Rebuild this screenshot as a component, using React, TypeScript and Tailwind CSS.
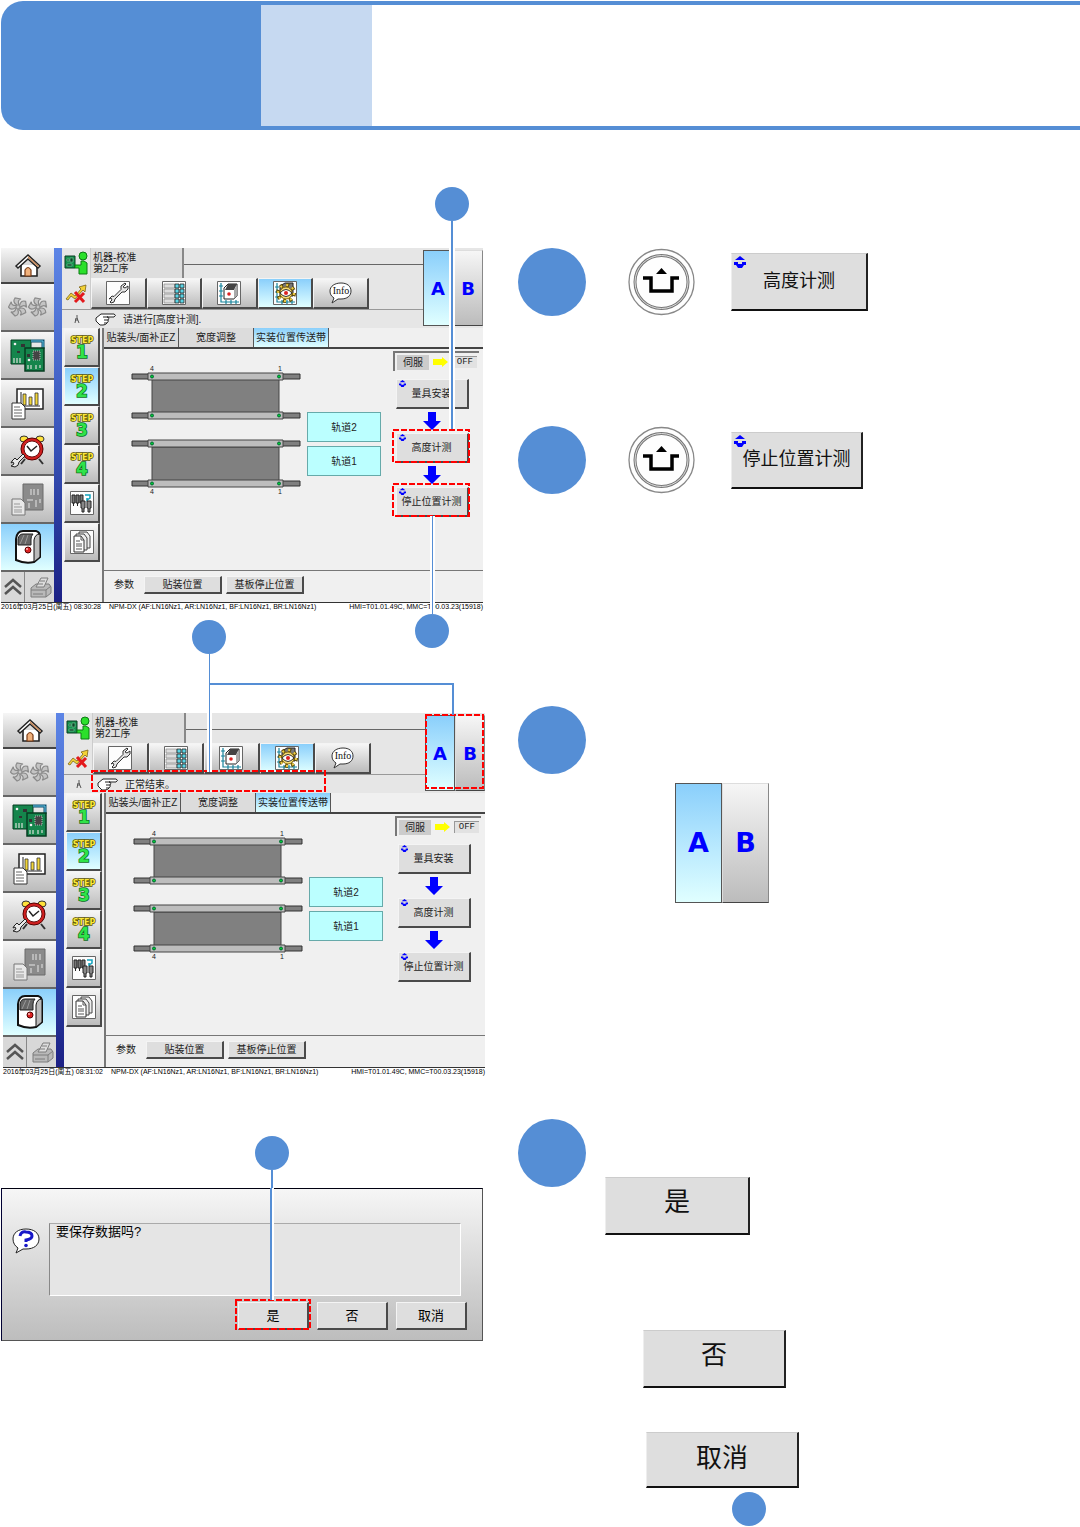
import type { ReactNode } from "react";
import clsx from "clsx";

const raised =
  "border-t border-l border-r-2 border-b-2 border-t-[#f4f4f4] border-l-[#f4f4f4] border-r-[#4a4a4a] border-b-[#4a4a4a]";
const grey = "bg-linear-to-b from-[#f6f6f6] to-[#bcbcbc]";
const active = "bg-linear-to-b from-[#8acffb] to-[#e0ffff]";

function HomeIcon() {
  return (
    <svg width="28" height="26" viewBox="0 0 28 26" aria-hidden="true">
      <path d="M7 13v11h16V13" fill="#fff" stroke="#222" strokeWidth="1.6" />
      <path d="M2 14 14 3l12 11-2 2L14 7 4 16Z" fill="#fff" stroke="#222" strokeWidth="1.5" />
      <path d="M14 4 25 14l-1 1L14 6Z" fill="#c98a5a" />
      <path d="M11 24v-6q3-5 6 0v6Z" fill="#f2b27c" stroke="#7a3b14" strokeWidth="1.2" />
    </svg>
  );
}

function FanIcon() {
  return (
    <svg width="40" height="24" viewBox="0 0 40 24" fill="none" stroke="#8a8a8a" strokeWidth="1.2" aria-hidden="true">
      {[10, 30].map((x) => (
        <g key={x} transform={`translate(${x} 12)`}>
          {[0, 72, 144, 216, 288].map((a) => (
            <path key={a} transform={`rotate(${a})`} d="M-1-2Q-6-5-3-9L3-8Q-1-7 1-2" fill="#c4c4c4" />
          ))}
          <circle r="2" fill="#c4c4c4" />
        </g>
      ))}
    </svg>
  );
}

function BoardsIcon() {
  return (
    <svg width="38" height="38" viewBox="0 0 38 38" aria-hidden="true">
      <path d="M2 4h20v24H2Z" fill="#15854c" stroke="#063d20" />
      <path d="M22 5h12v8" fill="none" stroke="#0b4e6e" strokeWidth="3" />
      <path d="M22 5h12v8" fill="none" stroke="#69c8e8" />
      <path d="M16 12h19v23H16Z" fill="#15854c" stroke="#063d20" strokeWidth="1.5" />
      <path d="M24 15h7v9h-7Z" fill="#444" stroke="#bbb" strokeDasharray="1 1" />
      <path d="M5 22v5M8 22v5M11 22v5M19 29v4M22 29v4M27 29v4M31 29v3" stroke="#a8c8b4" strokeWidth="1.6" />
      <path d="M12 8h4v3h-4ZM18 18h3v3h-3ZM8 15h3v2H8Z" fill="#333" />
      <circle cx="6" cy="8" r="1.3" fill="#eee" />
      <circle cx="20" cy="24" r="1.3" fill="#eee" />
    </svg>
  );
}

function ChartIcon() {
  return (
    <svg width="34" height="34" viewBox="0 0 34 34" aria-hidden="true">
      <path d="M6 3h26v20H6Z" fill="#fff" stroke="#222" strokeWidth="1.5" />
      <path d="M10 6v14h19" fill="none" stroke="#222" />
      <path d="M12 8h3v11h-3ZM18 11h3v8h-3ZM24 7h3v12h-3Z" fill="#f2d63a" stroke="#333" strokeWidth=".8" />
      <path d="M1 17h9l4 4v12H1Z" fill="#fff" stroke="#333" />
      <path d="M3 21h6M3 24h8M3 27h8M3 30h8" stroke="#666" />
    </svg>
  );
}

function ClockIcon() {
  return (
    <svg width="36" height="34" viewBox="0 0 36 34" aria-hidden="true">
      <path d="m15 25-4 5M29 25l4 5" stroke="#333" strokeWidth="2" />
      <ellipse cx="14" cy="5" rx="4" ry="3" fill="#ffe23a" stroke="#333" />
      <ellipse cx="30" cy="5" rx="4" ry="3" fill="#ffe23a" stroke="#333" />
      <circle cx="22" cy="15" r="11" fill="#d32020" stroke="#500" />
      <circle cx="22" cy="15" r="8" fill="#fff" stroke="#611" />
      <path d="m17 12 4 5 6-5" fill="none" stroke="#222" strokeWidth="1.5" />
      <path d="m2 27 3-3 2 2 6-6 2 2-6 6q0 4-4 5l-4-1 3-2-1-2-2 1Z" fill="#e8e8e8" stroke="#222" />
    </svg>
  );
}

function ReportIcon() {
  return (
    <svg width="34" height="34" viewBox="0 0 34 34" aria-hidden="true">
      <path d="M12 2h20v26H12Z" fill="#8b8b8b" stroke="#6b6b6b" />
      <path d="M20 7v6M23 7v6M27 7v6M16 18h6M18 21v5M25 18v7M29 17v4" stroke="#c8c8c8" strokeWidth="1.5" />
      <path d="M1 17h9l4 4v12H1Z" fill="#e8e8e8" stroke="#777" />
      <path d="M3 22h6M3 25h8M3 28h8M3 30h8" stroke="#999" />
    </svg>
  );
}

function MachineIcon() {
  return (
    <svg width="28" height="36" viewBox="0 0 28 36" aria-hidden="true">
      <path d="M2 31V10Q3 2 9 2h13q4 1 4 6v20l-6 5q-9 2-18-2Z" fill="#fff" stroke="#111" strokeWidth="2" />
      <path d="M20 33V11q1-6 6-6v23Z" fill="#bbb" stroke="#111" />
      <path d="M4 16v-6q1-5 5-5h10q-2 2-2 5v6Z" fill="#666" stroke="#222" />
      <path d="m6 15 4-9M11 15l3-9" stroke="#999" />
      <circle cx="14" cy="21" r="3" fill="#d22" stroke="#500" />
      <circle cx="13" cy="20" r="1" fill="#fbb" />
    </svg>
  );
}

function PrinterIcon() {
  return (
    <svg width="24" height="24" viewBox="0 0 24 24" fill="#b9b9b9" stroke="#7d7d7d" aria-hidden="true">
      <path d="m3 13 5-4h13l2 3v6l-5 4H3Z" />
      <path d="m8 12 5-9h7l-4 9Z" fill="#ddd" />
      <path d="M3 15h15l5-4M18 15v7M5 19h10M12 6h5M10 9h5" fill="none" />
    </svg>
  );
}

function OperatorIcon() {
  return (
    <svg width="24" height="24" viewBox="0 0 24 24" aria-hidden="true">
      <path d="M1 5h10v12H1Z" fill="#17914f" stroke="#063d20" />
      <path d="M3 8h2v2H3ZM6 7h3v4H6ZM3 13h5v2H3Z" fill="#0a4727" stroke="#8fd0a8" strokeWidth=".5" />
      <path d="M11 14h6v-4h3l3 2v11h-8v-6h-4Z" fill="#2be02b" stroke="#0c7a14" />
      <circle cx="19" cy="5" r="4" fill="#2be02b" stroke="#0c7a14" />
    </svg>
  );
}

function NoFeedIcon() {
  return (
    <svg width="22" height="20" viewBox="0 0 22 20" aria-hidden="true">
      <path d="m1 15 5-6 4 3 6-7-2-2 7-2-1 7-2-2-8 9-4-3-3 4Z" fill="#f3d235" stroke="#7c641b" strokeWidth=".8" />
      <path d="m10 8 9 10M19 9l-9 9" stroke="#e3191c" strokeWidth="3" />
    </svg>
  );
}

function HandIcon() {
  return (
    <svg width="22" height="14" viewBox="0 0 22 14" fill="#fff" stroke="#222" aria-hidden="true">
      <path d="M6 2h13q3 1 0 3h-7q3 0 1 3 1 1-1 3-1 2-4 2H5L1 9V6Z" />
      <path d="M8 5h5M9 8h4M9 11h3" fill="none" />
    </svg>
  );
}

function IconTile({ children }: { children: ReactNode }) {
  return (
    <svg width="24" height="24" viewBox="0 0 24 24" fill="none" aria-hidden="true">
      <path d="M.5.5h23v23H.5Z" fill="#fdfdfd" stroke="#666" />
      {children}
    </svg>
  );
}

function WrenchIcon() {
  return (
    <IconTile>
      <path
        d="m3 18 3-3 2 .5 7-7V5l4-3 1 1-3 3 2 1 3-2v3l-3 3h-3l-7 7-1 3-3 1-1-1 2-2-1-2Z"
        fill="#e4e4e4"
        stroke="#333"
      />
    </IconTile>
  );
}

function TableIcon() {
  return (
    <IconTile>
      <path d="M2 3h11v4H2ZM2 8h11v4H2ZM2 13h11v4H2ZM2 18h11v4H2Z" fill="#ddd" stroke="#888" strokeWidth=".7" />
      <path
        d="M13 3h4v4h-4ZM18 3h4v4h-4ZM13 8h4v4h-4ZM18 8h4v4h-4ZM13 13h4v4h-4ZM18 13h4v4h-4ZM13 18h4v4h-4ZM18 18h4v4h-4Z"
        fill="#5cd4e4"
        stroke="#222"
        strokeWidth=".8"
      />
    </IconTile>
  );
}

function AxisMachineIcon() {
  return (
    <IconTile>
      <path d="M4 2v19h18M2 5h4M2 10h4M2 15h4M9 19v4M14 19v4M19 19v4" stroke="#17839c" strokeWidth="1.2" />
      <path d="M7 18V7l4-4h9v12l-3 3Z" fill="#fff" stroke="#222" />
      <path d="m8 9 3-6h9l-3 6Z" fill="#444" />
      <path d="M17 9v9l3-3V4Z" fill="#aaa" />
      <circle cx="12" cy="13" r="1.8" fill="#d22" />
    </IconTile>
  );
}

function AxisGearIcon() {
  return (
    <IconTile>
      <path d="M4 2v19h18M2 6h4M2 11h4M2 16h4M9 19v4M14 19v4M19 19v4" stroke="#17839c" strokeWidth="1.2" />
      <path d="M7 5 12 2h8v13H7Z" fill="#777" stroke="#222" />
      <circle cx="13" cy="12" r="8" stroke="#5e4b08" strokeWidth="4" strokeDasharray="3 3.28" />
      <circle cx="13" cy="12" r="8" stroke="#f0cf45" strokeWidth="2" strokeDasharray="2 4.28" />
      <circle cx="13" cy="12" r="6" fill="#f5dc75" stroke="#8b6d0e" />
      <path d="M7 12q6-7 12 0-6 7-12 0Z" fill="#fff" stroke="#333" />
      <circle cx="13" cy="12" r="2" fill="#d22" />
    </IconTile>
  );
}

function InfoIcon() {
  return (
    <svg width="24" height="24" viewBox="0 0 24 24" aria-hidden="true">
      <path d="M12 2c6 0 10 3 10 8s-4 8-10 8H9l-6 4 2-5c-3-2-4-4-4-7 0-5 5-8 11-8Z" fill="#fff" stroke="#333" />
      <text x="12" y="13" textAnchor="middle" fontSize="10" fontFamily="Liberation Serif, serif" fill="#111">
        Info
      </text>
    </svg>
  );
}

function NozzleIcon() {
  return (
    <IconTile>
      {[2, 6, 10].map((x) => (
        <path key={x} d={`M${x} 4h3v8H${x}ZM${x + 1.5} 12v3`} fill="#777" stroke="#222" />
      ))}
      <path d="M15 4h5v3l-3 2M17 7v3" stroke="#12a3bd" strokeWidth="1.5" />
      {[11, 17].map((x) => (
        <path key={x} d={`M${x} 10h4v7h-1v4h-2v-4h-1Z`} fill="#888" stroke="#222" />
      ))}
    </IconTile>
  );
}

function PagesIcon() {
  return (
    <IconTile>
      <path d="M9 2h8l3 4v12H9Z" fill="#eee" stroke="#444" />
      <path d="M6 4h8l3 4v12H6Z" fill="#eee" stroke="#444" />
      <path d="M4 6h7l3 4v12H4Z" fill="#fff" stroke="#333" />
      <path d="M11 6v4h3M6 11h4M6 14h6M6 16h6M6 19h6" stroke="#555" />
    </IconTile>
  );
}

function DiamondIcon({ className }: { className: string }) {
  return (
    <svg className={className} viewBox="0 0 12 12" aria-hidden="true">
      <path d="M6 0 11 4H1ZM0 6h4v2h4V6h4v3h-2l-2 3H4L2 9H0Z" fill="#00f" />
    </svg>
  );
}

function DownArrow() {
  return (
    <svg width="18" height="18" viewBox="0 0 18 18" className="my-[3px]" aria-hidden="true">
      <path d="M5 0h8v9h5l-9 9-9-9h5Z" fill="#00f" />
    </svg>
  );
}

function Marker() {
  return (
    <svg className="h-3 w-3" viewBox="0 0 12 12" aria-hidden="true">
      <path d="M6 2v4M5 5l-1 5M6 5l2 5M4 7h3" stroke="#555" fill="none" />
    </svg>
  );
}

function Dashes({ className }: { className: string }) {
  return (
    <svg className={clsx("pointer-events-none absolute overflow-visible", className)} aria-hidden="true">
      <rect width="100%" height="100%" fill="none" stroke="#f00" strokeWidth="2" strokeDasharray="6 2" />
    </svg>
  );
}

function Dot({ className }: { className?: string }) {
  return <div className={clsx("size-[34px] shrink-0 rounded-full bg-[#558ed5]", className)} />;
}

function Bullet() {
  return <div className="size-[68px] shrink-0 rounded-full bg-[#558ed5]" />;
}

function Step({ n, on }: { n: number; on?: boolean }) {
  return (
    <button type="button" className={clsx("flex h-[39px] items-center justify-center", raised, on ? active : grey)}>
      <svg
        width="32"
        height="34"
        viewBox="0 0 32 34"
        textAnchor="middle"
        fontFamily="DejaVu Sans, sans-serif"
        fontWeight="bold"
        strokeWidth="1.5"
        paintOrder="stroke"
      >
        <text x="16" y="13" fontSize="8" fill="#fbe83c" stroke="#5a5200">
          STEP
        </text>
        <text x="16" y="28" fontSize="17" fill="#2fe34a" stroke="#0b6b1b">
          {n}
        </text>
      </svg>
    </button>
  );
}

function Rails() {
  return (
    <svg width="170" height="130" viewBox="0 0 170 130" fontSize="7" fontFamily="Liberation Sans, sans-serif" className="shrink-0">
      <path d="M21 12h127v37H21ZM21 81h127v37H21Z" fill="#808080" stroke="#444" />
      {[7, 46, 74, 114].map((y) => (
        <g key={y}>
          <path d={`M1 ${y + 1}h168v5H1Z`} fill="#808080" stroke="#333" />
          <path d={`M17 ${y}h135v7H17Z`} fill="#bdbdbd" stroke="#444" />
          <circle cx="21" cy={y + 3.5} r="1.5" fill="#0c3" stroke="#063" />
          <circle cx="148" cy={y + 3.5} r="1.5" fill="#0c3" stroke="#063" />
        </g>
      ))}
      <g fill="#222">
        <text x="19" y="5">4</text>
        <text x="147" y="5">1</text>
        <text x="19" y="128">4</text>
        <text x="147" y="128">1</text>
      </g>
    </svg>
  );
}

function Command({ label, marked }: { label: string; marked?: boolean }) {
  return (
    <button type="button" className={clsx("relative h-[30px] w-[73px] bg-[#dedede] text-[10px]", raised)}>
      <DiamondIcon className="absolute top-0 left-0.5 size-[7px]" />
      {label}
      {marked && <Dashes className="-top-1 -left-1 h-8 w-[76px]" />}
    </button>
  );
}

function LaneSwitch({ large }: { large?: boolean }) {
  return (
    <div
      className={clsx(
        "flex font-['DejaVu_Sans',sans-serif] font-bold text-[#00f] [text-shadow:2px_2px_2px_#777]",
        large ? "h-[120px] w-[94px] text-[27px]" : "h-[76px] w-[60px] text-[18px]",
      )}
    >
      <button type="button" className={clsx("flex-1 border border-[#555]", active)}>A</button>
      <button type="button" className={clsx("flex-1 border border-t-[#ddd] border-r-[#888] border-b-[#444] border-l-[#ddd]", grey)}>B</button>
    </div>
  );
}

type ScreenProps = {
  message: string;
  time: string;
  markCommands?: boolean;
  markResult?: boolean;
};

function MachineScreen({ message, time, markCommands, markResult }: ScreenProps) {
  const menu = [
    { name: "风扇", icon: <FanIcon /> },
    { name: "基板", icon: <BoardsIcon /> },
    { name: "统计", icon: <ChartIcon /> },
    { name: "维护", icon: <ClockIcon /> },
    { name: "报告", icon: <ReportIcon /> },
    { name: "机器", icon: <MachineIcon />, on: true },
  ];
  const tools = [
    { name: "工具", icon: <WrenchIcon /> },
    { name: "列表", icon: <TableIcon /> },
    { name: "轴", icon: <AxisMachineIcon /> },
    { name: "校准", icon: <AxisGearIcon />, on: true },
    { name: "信息", icon: <InfoIcon /> },
  ];

  return (
    <div className="flex flex-col bg-[#f0f0f0] text-[10px] leading-[11px] text-[#222]">
      <div className="flex">
        <nav className="flex w-[53px] shrink-0 flex-col">
          <button type="button" aria-label="主页" className={clsx("flex h-9 items-center justify-center border-b-2 border-[#444]", grey)}>
            <HomeIcon />
          </button>
          {menu.map((m) => (
            <button
              key={m.name}
              type="button"
              aria-label={m.name}
              className={clsx("flex h-12 items-center justify-center border-b-2 border-[#666]", m.on ? active : grey)}
            >
              {m.icon}
            </button>
          ))}
          <div className="flex h-[30px]">
            <button type="button" aria-label="展开" className="flex w-6 items-center justify-center border-r border-[#888] bg-[#d8d8d8]">
              <svg width="18" height="18" viewBox="0 0 18 18" fill="none" stroke="#555" strokeWidth="2.5" aria-hidden="true">
                <path d="m1 9 8-7 8 7M1 16l8-7 8 7" />
              </svg>
            </button>
            <button type="button" aria-label="打印" className="flex flex-1 items-center justify-center bg-[#d8d8d8]">
              <PrinterIcon />
            </button>
          </div>
        </nav>
        <div className="w-2 shrink-0 bg-linear-to-b from-[#5d85e6] via-[#3c58bd] to-[#1c2085]" />

        <div className="flex min-w-0 flex-1 flex-col">
          <div className="flex h-20 bg-[#e6e6e6]">
            <div className="flex min-w-0 flex-1 flex-col">
              <div className="flex h-[30px]">
                <div className="flex w-[29px] items-center justify-center border-r border-[#ccc]">
                  <OperatorIcon />
                </div>
                <div className="w-[93px] border-r-2 border-[#888] bg-[#dedede] pt-1 pl-0.5">
                  <p>机器-校准</p>
                  <p>第2工序</p>
                </div>
                <div className="h-[17px] flex-1 border-b border-[#666]" />
              </div>
              <div className="flex h-8 border-b border-[#999]">
                <div className="flex w-[29px] items-center justify-center border-r border-[#ccc]">
                  <NoFeedIcon />
                </div>
                <div className="flex w-[278px]">
                  {tools.map((t) => (
                    <button
                      key={t.name}
                      type="button"
                      aria-label={t.name}
                      className={clsx("flex flex-1 items-center justify-center", raised, t.on ? active : grey)}
                    >
                      {t.icon}
                    </button>
                  ))}
                </div>
              </div>
              <div className="relative flex flex-1 items-center">
                <div className="flex w-[29px] justify-center">
                  <Marker />
                </div>
                <div className="flex items-center gap-1.5 pl-1">
                  <HandIcon />
                  <p>{message}</p>
                </div>
                {markResult && <Dashes className="-top-1 left-[28px] h-5 w-[233px]" />}
              </div>
            </div>
            <div className="relative pt-0.5">
              <LaneSwitch />
              {markResult && <Dashes className="top-0.5 right-0.5 h-[73px] w-[57px]" />}
            </div>
          </div>

          <div className="flex flex-1 pl-0.5">
            <div className="flex w-9 shrink-0 flex-col">
              <Step n={1} />
              <Step n={2} on />
              <Step n={3} />
              <Step n={4} />
              <button type="button" aria-label="吸嘴" className={clsx("flex h-[39px] items-center justify-center", raised, grey)}>
                <NozzleIcon />
              </button>
              <button type="button" aria-label="文件" className={clsx("flex h-[39px] items-center justify-center", raised, grey)}>
                <PagesIcon />
              </button>
            </div>
            <div className="ml-0.5 flex min-w-0 flex-1 flex-col border-l-2 border-[#777]">
              <div className="flex h-[21px] border-b-2 border-[#444]">
                {["贴装头/面补正Z", "宽度调整", "实装位置传送带"].map((tab, i) => (
                  <button
                    key={tab}
                    type="button"
                    className={clsx("w-[75px] border-r border-[#555] whitespace-nowrap", i === 2 ? active : "bg-[#dcdcdc]")}
                  >
                    {tab}
                  </button>
                ))}
              </div>
              <div className="flex flex-1 justify-between pr-1 pl-[27px]">
                <div className="flex gap-1.5 pt-[17px]">
                  <Rails />
                  <div className="flex w-[74px] flex-col gap-1 pt-[46px]">
                    {["轨道2", "轨道1"].map((lane) => (
                      <div key={lane} className="flex h-[30px] items-center justify-center border border-[#6aa] bg-[#bff]">
                        {lane}
                      </div>
                    ))}
                  </div>
                </div>
                <div className="flex w-[86px] flex-col items-center pt-0.5 pr-2">
                  <div className="mb-2 flex h-5 w-[86px] items-center justify-between self-start border-t-2 border-l-2 border-[#777] px-0.5">
                    <span className="bg-[#ccc] px-1.5 py-0.5">伺服</span>
                    <svg width="15" height="10" viewBox="0 0 15 10" aria-hidden="true">
                      <path d="M0 2h9V0l6 5-6 5V8H0Z" fill="#ff0" />
                    </svg>
                    <span className="border-t border-l border-[#999] bg-[#e2e2e2] px-1 font-['Liberation_Mono',monospace] text-[9px]">OFF</span>
                  </div>
                  <Command label="量具安装" />
                  <DownArrow />
                  <Command label="高度计测" marked={markCommands} />
                  <DownArrow />
                  <Command label="停止位置计测" marked={markCommands} />
                </div>
              </div>
              <div className="flex h-[32px] items-center gap-1 border-t border-[#777] pb-1 pl-2.5">
                <span className="mr-1.5">参数</span>
                <button type="button" className={clsx("h-[18px] w-[78px] bg-[#dedede]", raised)}>贴装位置</button>
                <button type="button" className={clsx("h-[18px] w-[78px] bg-[#dedede]", raised)}>基板停止位置</button>
              </div>
            </div>
          </div>
        </div>
      </div>
      <footer className="flex h-2 items-center border-t border-[#333] bg-white font-['Liberation_Sans','Noto_Sans_CJK_SC',sans-serif] text-[7px] leading-[7px] whitespace-nowrap text-black">
        <span>2016年03月25日(周五) {time}</span>
        <span className="ml-2">NPM-DX (AF:LN16Nz1, AR:LN16Nz1, BF:LN16Nz1, BR:LN16Nz1)</span>
        <span className="ml-auto">HMI=T01.01.49C, MMC=T00.03.23(15918)</span>
      </footer>
    </div>
  );
}

function SaveDialog() {
  return (
    <div className="border border-t-[#001] border-r-[#555] border-b-[#555] border-l-[#003] bg-linear-to-b from-[#f6f6f6] to-[#bdbdbd] pt-[34px] pr-[15px] pb-2.5 pl-2.5 text-[13px] text-black">
      <div className="flex gap-2 pr-1.5">
        <svg width="29" height="28" viewBox="0 0 29 28" className="mt-1 shrink-0" aria-hidden="true">
          <path d="M14 2c8 0 13 4 13 10s-5 10-13 10h-3l-7 4 2-5c-3-2-5-5-5-9C1 6 6 2 14 2Z" fill="#fff" stroke="#222" />
          <path d="M8 9q1-5 6-4 6 0 6 4 0 3-6 4v2" fill="none" stroke="#1717c8" strokeWidth="3" />
          <circle cx="14" cy="18.500" r="1.800" fill="#1717c8" />
        </svg>
        <p className="h-[73px] flex-1 border border-t-[#aaa] border-r-white border-b-white border-l-[#888] bg-[#e5e5e5] px-1.5 leading-4">
          要保存数据吗?
        </p>
      </div>
      <div className="mt-1.5 flex justify-end gap-2">
        {["是", "否", "取消"].map((label, i) => (
          <button key={label} type="button" className={clsx("relative h-7 w-[71px] bg-[#dedede]", raised)}>
            {label}
            {i === 0 && <Dashes className="-top-[3px] -left-[3px] h-[29px] w-[74px]" />}
          </button>
        ))}
      </div>
    </div>
  );
}

function RaiseKey() {
  return (
    <svg width="67" height="68" viewBox="0 0 67 68" fill="none" className="shrink-0" aria-hidden="true">
      <circle cx="33.5" cy="34" r="32.5" fill="#fefefe" stroke="#888" strokeWidth="1.3" />
      <circle cx="33.5" cy="34" r="26.5" stroke="#777" strokeWidth="3" />
      <circle cx="33.5" cy="34" r="26.5" stroke="#ddd" />
      <path d="M15 30h8v13h21V30h7" stroke="#000" strokeWidth="3.5" />
      <path d="m28 26 5.5-6 5.5 6Z" fill="#000" />
    </svg>
  );
}

function BigButton({ label, className, icon }: { label: string; className: string; icon?: boolean }) {
  return (
    <button
      type="button"
      className={clsx(
        "relative block border-t border-l border-r-2 border-b-2 border-t-[#ccc] border-r-[#222] border-b-[#111] border-l-[#eee] bg-[#dedede] text-[#111]",
        className,
      )}
    >
      {icon && <DiamondIcon className="absolute top-0.5 left-0.5 size-3" />}
      {label}
    </button>
  );
}

export default function App() {
  return (
    <div className="bg-white font-['Liberation_Sans','Noto_Sans_CJK_SC',sans-serif]">
      <header className="flex h-[130px] pt-px pl-px">
        <div className="w-[260px] rounded-l-[22px] bg-[#558ed5]" />
        <div className="flex flex-1 border-y-4 border-[#558ed5]">
          <div className="w-[111px] bg-[#c6d9f1]" />
        </div>
      </header>

      <main className="grid grid-cols-[minmax(0,45fr)_minmax(0,55fr)] pt-[118px]">
        <div>
          <div className="relative pr-[3px] pl-px">
            <MachineScreen message="请进行[高度计测]." time="08:30:28" markCommands />
            <div className="absolute right-[17px] -top-[61px] flex flex-col items-center">
              <Dot />
              <div className="h-[27px] w-0.5 bg-[#558ed5]" />
              <div className="h-[181px] w-1.5 border-x-2 border-white bg-[#558ed5]" />
            </div>
            <div className="absolute top-[268px] right-[37px] flex flex-col items-center">
              <div className="h-[94px] w-[5px] border-x-2 border-white bg-[#558ed5]" />
              <div className="h-1 w-px bg-[#558ed5]" />
              <Dot />
            </div>
          </div>

          <div className="relative mt-[103px] pr-px pl-[3px]">
            <MachineScreen message="正常结束。" time="08:31:02" markResult />
            <div className="absolute -top-[93px] left-[192px] flex flex-col items-center">
              <Dot />
              <div className="h-[59px] w-px bg-[#558ed5]" />
              <div className="h-[59px] w-[5px] border-x-2 border-white bg-[#558ed5]" />
            </div>
            <div className="absolute -top-[30px] right-8 left-[209px] h-8 border-t-2 border-r-2 border-[#558ed5]" />
          </div>

          <div className="relative mt-[113px] pr-[3px] pl-px">
            <SaveDialog />
            <div className="absolute right-[197px] -top-[52px] flex flex-col items-center">
              <Dot />
              <div className="h-[18px] w-0.5 bg-[#558ed5]" />
              <div className="h-[112px] w-1 border-r-2 border-r-white bg-[#558ed5]" />
            </div>
          </div>
        </div>

        <div className="pl-8">
          <section className="flex h-[178px] items-start">
            <div className="flex items-center">
              <Bullet />
              <div className="ml-[42px]">
                <RaiseKey />
              </div>
              <BigButton label="高度计测" icon className="ml-9 h-[58px] w-[137px] text-[18px]" />
            </div>
          </section>

          <section className="flex h-[280px] items-start">
            <div className="flex items-center">
              <Bullet />
              <div className="ml-[42px]">
                <RaiseKey />
              </div>
              <BigButton label="停止位置计测" icon className="ml-9 h-[57px] w-[132px] text-[18px]" />
            </div>
          </section>

          <section className="h-[413px]">
            <Bullet />
            <div className="mt-[9px] ml-[157px]">
              <LaneSwitch large />
            </div>
          </section>

          <section className="flex">
            <Bullet />
            <div className="ml-[19px] pt-[58px] text-[26px] leading-8">
              <BigButton label="是" className="h-[58px] w-[145px] pb-2" />
              <BigButton label="否" className="mt-[95px] ml-[38px] h-[58px] w-[143px] pb-2" />
              <BigButton label="取消" className="mt-11 ml-[41px] h-14 w-[153px] border-b-0 pb-1" />
              <Dot className="mt-1 ml-[127px]" />
            </div>
          </section>
        </div>
      </main>
    </div>
  );
}
